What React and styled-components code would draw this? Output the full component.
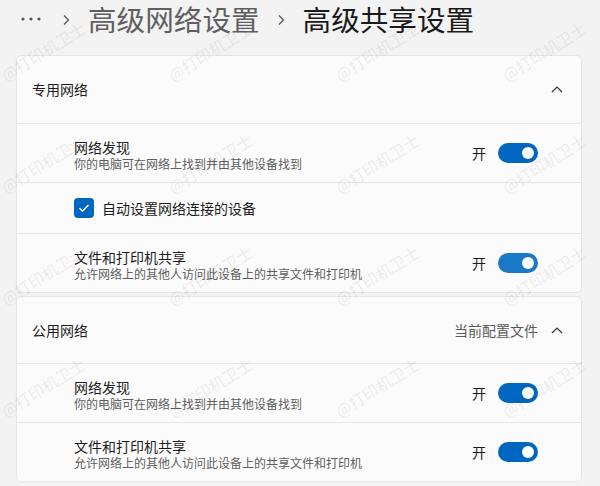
import styled, { createGlobalStyle } from 'styled-components'

const Global = createGlobalStyle`
  body {
    margin: 0;
    background: #f3f3f3;
    font-family: 'Noto Sans CJK SC', 'Noto Sans', sans-serif;
    color: #1b1b1b;
  }
`

const Page = styled.div`
  position: relative;
  width: 600px;
  height: 486px;
  overflow: hidden;
  padding: 0 18px 0 16px;
  box-sizing: border-box;
`

const Crumbs = styled.div`
  display: flex;
  align-items: center;
  height: 41px;
  margin-top: -2px;
  margin-bottom: 16px;
  padding-left: 4px;
`

const Crumb = styled.span`
  font-size: 28.6px;
  line-height: 41px;
  white-space: nowrap;
  color: ${(p) => (p.current ? '#1a1a1a' : '#5f5f5f')};
`

const Sep = styled.svg`
  width: 8px;
  height: 12px;
  margin: 2px ${(p) => p.right}px 0 ${(p) => p.left}px;
`

const Card = styled.section`
  background: #fbfbfb;
  border: 1px solid #e5e5e5;
  border-radius: 5px;
  margin-bottom: 3px;
`

const Header = styled.div`
  display: flex;
  align-items: center;
  height: ${(p) => p.h}px;
  padding: 0 18px 0 15px;
  font-size: 14px;
`

const HeaderTitle = styled.div`
  flex: 1;
  margin-top: -1px;
`

const Profile = styled.span`
  font-size: 14px;
  color: #5a5a5a;
  margin-right: 13px;
`

const Row = styled.div`
  display: flex;
  align-items: center;
  height: ${(p) => p.h || 58}px;
  border-top: 1px solid #e5e5e5;
  padding: 0 43px 0 57px;
`

const Texts = styled.div`
  flex: 1;
  display: flex;
  flex-direction: column;
  padding-top: 3px;
`

const Title = styled.div`
  font-size: 14px;
  line-height: 18px;
`

const Sub = styled.div`
  font-size: 12px;
  line-height: 15px;
  color: #5e5e5e;
`

const State = styled.span`
  font-size: 14px;
  margin-right: 12px;
`

const Toggle = styled.div`
  position: relative;
  width: 40px;
  height: 20px;
  border-radius: 10px;
  background: ${(p) => p.color || '#0067c0'};

  &::after {
    content: '';
    position: absolute;
    right: 4px;
    top: 4px;
    width: 12px;
    height: 12px;
    border-radius: 50%;
    background: #fff;
  }
`

const Box = styled.div`
  width: 20px;
  height: 20px;
  border-radius: 4px;
  background: #0067c0;
  display: flex;
  align-items: center;
  justify-content: center;
  margin-right: 8px;
`

const CheckLabel = styled.span`
  font-size: 14px;
`

const Marks = styled.div`
  position: absolute;
  inset: 0;
  pointer-events: none;
`

const Mark = styled.span`
  position: absolute;
  font-size: 16px;
  line-height: 16px;
  white-space: nowrap;
  color: rgba(0, 0, 0, 0.085);
  transform: rotate(-32deg);
  transform-origin: left bottom;
`

const Chevron = () => (
  <svg width="12" height="7" viewBox="0 0 12 7">
    <path d="M1 6 L6 1 L11 6" fill="none" stroke="#333" strokeWidth="1.2" />
  </svg>
)

const Arrow = ({ left, right }) => (
  <Sep left={left} right={right} viewBox="0 0 8 12">
    <path d="M2 1.5 L6.5 6 L2 10.5" fill="none" stroke="#555" strokeWidth="1.3" />
  </Sep>
)

const Setting = ({ title, sub, color }) => (
  <Row>
    <Texts>
      <Title>{title}</Title>
      <Sub>{sub}</Sub>
    </Texts>
    <State>开</State>
    <Toggle color={color} />
  </Row>
)

const discover = ['网络发现', '你的电脑可在网络上找到并由其他设备找到']
const share = ['文件和打印机共享', '允许网络上的其他人访问此设备上的共享文件和打印机']

const marks = []
for (const y of [83, 195, 307, 419]) {
  for (const x of [7, 174, 341, 508]) marks.push({ x, y })
}

export default function App() {
  return (
    <Page>
      <Global />
      <Crumbs>
        <svg width="22" height="6" viewBox="0 0 22 6">
          <circle cx="3" cy="3" r="1.6" fill="#555" />
          <circle cx="11" cy="3" r="1.6" fill="#555" />
          <circle cx="19" cy="3" r="1.6" fill="#555" />
        </svg>
        <Arrow left={20} right={18} />
        <Crumb>高级网络设置</Crumb>
        <Arrow left={17} right={18} />
        <Crumb current>高级共享设置</Crumb>
      </Crumbs>

      <Card>
        <Header h={67}>
          <HeaderTitle>专用网络</HeaderTitle>
          <Chevron />
        </Header>
        <Setting title={discover[0]} sub={discover[1]} />
        <Row h={50}>
          <Box>
            <svg width="12" height="10" viewBox="0 0 12 10">
              <path d="M1.5 5.2 L4.5 8 L10.5 2" fill="none" stroke="#fff" strokeWidth="1.4" />
            </svg>
          </Box>
          <CheckLabel>自动设置网络连接的设备</CheckLabel>
        </Row>
        <Setting title={share[0]} sub={share[1]} color="#1a78c9" />
      </Card>

      <Card>
        <Header h={66}>
          <HeaderTitle>公用网络</HeaderTitle>
          <Profile>当前配置文件</Profile>
          <Chevron />
        </Header>
        <Setting title={discover[0]} sub={discover[1]} />
        <Setting title={share[0]} sub={share[1]} />
      </Card>

      <Marks>
        {marks.map(({ x, y }) => (
          <Mark key={`${x}-${y}`} style={{ left: x, top: y - 16 }}>
            @打印机卫士
          </Mark>
        ))}
      </Marks>
    </Page>
  )
}
